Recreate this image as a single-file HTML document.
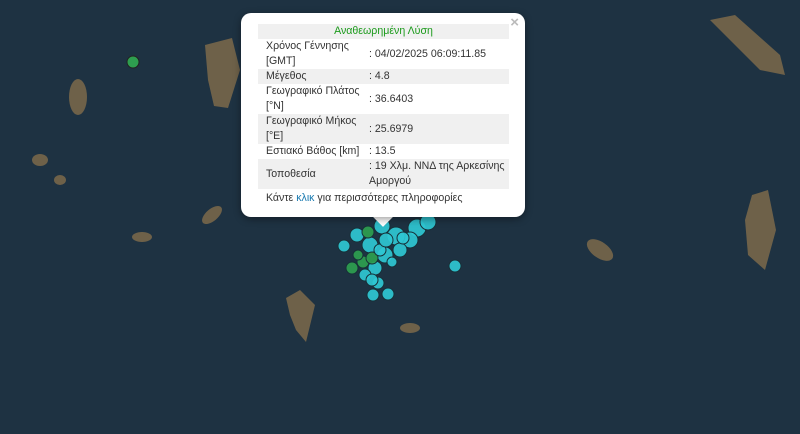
<!DOCTYPE html>
<html><head><meta charset="utf-8"><style>
body{margin:0;width:800px;height:434px;overflow:hidden;background:#1e3242;font-family:"Liberation Sans",sans-serif}
svg{position:absolute;left:0;top:0}
.pop{position:absolute;left:241px;top:13px;width:284px;height:204px;background:#fff;border-radius:10px;box-shadow:0 2px 8px rgba(0,0,0,.4)}
.tip{position:absolute;left:376px;top:210px;width:14px;height:14px;background:#fff;transform:rotate(45deg)}
.x{position:absolute;right:6px;top:1px;color:#bbb;font-size:15px;font-weight:bold}
.t{position:absolute;left:17px;top:11px;width:251px;font-size:10.6px;color:#333;line-height:15px}
.r{display:flex;align-items:center;white-space:nowrap}
.r:nth-child(odd){background:#f0f0f0}
.a{width:103px;padding-left:8px}
.b{padding-left:0}
.s{height:15px}.d{height:30px}
.h{justify-content:center;color:#1a9a1a}
.k{position:absolute;left:25px;top:179px;font-size:10.6px;color:#333;white-space:nowrap}
.k b{font-weight:normal;color:#1a7ab0}
</style></head><body>
<svg width="800" height="434">
<rect width="800" height="434" fill="#1e3242"/>
<g fill="#6e6149">
<path d="M205 45 L232 38 L240 70 L228 108 L214 106 L208 80Z"/>
<ellipse cx="78" cy="97" rx="9" ry="18"/>
<ellipse cx="40" cy="160" rx="8" ry="6"/>
<ellipse cx="60" cy="180" rx="6" ry="5"/>
<ellipse cx="142" cy="237" rx="10" ry="5"/>
<ellipse cx="212" cy="215" rx="12" ry="6" transform="rotate(-40 212 215)"/>
<path d="M710 20 L735 15 L780 55 L785 75 L760 70 L730 40Z"/>
<path d="M752 195 L768 190 L776 230 L765 270 L748 255 L745 220Z"/>
<ellipse cx="600" cy="250" rx="15" ry="8" transform="rotate(35 600 250)"/>
<path d="M286 298 L300 290 L315 305 L306 342 L296 330 L290 315Z"/>
<ellipse cx="410" cy="328" rx="10" ry="5"/>
</g>
<circle cx="133" cy="62" r="6" fill="#2e9e4f" stroke="#222"/>
<g stroke="#173038" stroke-width="1" fill="#2fc7d3" fill-opacity=".92">
<circle cx="455" cy="266" r="6"/>
<circle cx="344" cy="246" r="6"/>
<circle cx="357" cy="235" r="7"/>
<circle cx="417" cy="228" r="9"/>
<circle cx="428" cy="222" r="8"/>
<circle cx="410" cy="240" r="8"/>
<circle cx="396" cy="236" r="9"/>
<circle cx="382" cy="226" r="8"/>
<circle cx="370" cy="245" r="8"/>
<circle cx="385" cy="255" r="8"/>
<circle cx="400" cy="250" r="7"/>
<circle cx="375" cy="268" r="7"/>
<circle cx="388" cy="294" r="6"/>
<circle cx="373" cy="295" r="6"/>
<circle cx="378" cy="283" r="6"/>
<circle cx="365" cy="275" r="6"/>
</g>
<g stroke="#173038" fill="#2e9e4f" fill-opacity=".92">
<circle cx="352" cy="268" r="6"/>
<circle cx="363" cy="262" r="6"/>
<circle cx="368" cy="232" r="6"/>
<circle cx="358" cy="255" r="5"/>
<circle cx="372" cy="258" r="6"/>
</g>
<g stroke="#173038" fill="#2fc7d3" fill-opacity=".92">
<circle cx="380" cy="250" r="6"/><circle cx="392" cy="262" r="5"/><circle cx="403" cy="238" r="6"/><circle cx="386" cy="240" r="7"/><circle cx="372" cy="280" r="6"/>
</g>
</svg>
<div class="tip"></div>
<div class="pop"><span class="x">×</span>
<div class="t">
<div class="r s h">Αναθεωρημένη Λύση</div>
<div class="r d"><div class="a">Χρόνος Γέννησης<br>[GMT]</div><div class="b">: 04/02/2025 06:09:11.85</div></div>
<div class="r s"><div class="a">Μέγεθος</div><div class="b">: 4.8</div></div>
<div class="r d"><div class="a">Γεωγραφικό Πλάτος<br>[°N]</div><div class="b">: 36.6403</div></div>
<div class="r d"><div class="a">Γεωγραφικό Μήκος<br>[°E]</div><div class="b">: 25.6979</div></div>
<div class="r s"><div class="a">Εστιακό Βάθος [km]</div><div class="b">: 13.5</div></div>
<div class="r d"><div class="a">Τοποθεσία</div><div class="b">: 19 Χλμ. ΝΝΔ της Αρκεσίνης<br>Αμοργού</div></div>
</div>
<div class="k">Κάντε <b>κλικ</b> για περισσότερες πληροφορίες</div>
</div>
</body></html>
